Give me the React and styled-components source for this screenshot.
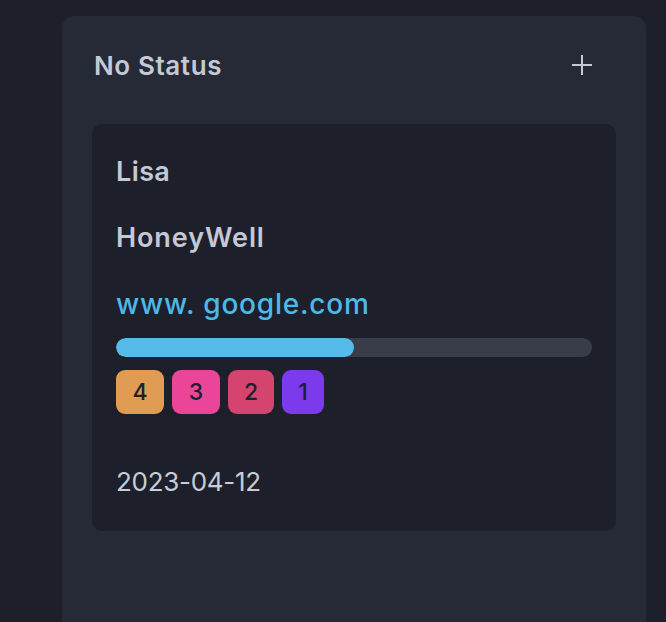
import React from "react";
import styled, { createGlobalStyle } from "styled-components";

const GlobalStyle = createGlobalStyle`
  html, body {
    margin: 0;
    padding: 0;
    background: #1d202a;
    font-family: "Inter", "Noto Sans", sans-serif;
    overflow: hidden;
  }
`;

const Page = styled.div`
  width: 666px;
  height: 622px;
  padding: 16px 0 0 62px;
  box-sizing: border-box;
  background: #1d202a;
  overflow: hidden;
`;

const Column = styled.div`
  width: 584px;
  height: 620px;
  background: #262a36;
  border-radius: 12px;
  padding: 31px 30px 0 30px;
  box-sizing: border-box;
`;

const Header = styled.div`
  display: flex;
  align-items: center;
  justify-content: space-between;
  height: 36px;
  padding: 0 24px 0 2px;
  margin-bottom: 41px;
`;

const Title = styled.h2`
  margin: 0;
  font-size: 26px;
  font-weight: 600;
  color: #c5c9d5;
  letter-spacing: 0.6px;
`;

const AddButton = styled.button`
  background: none;
  border: none;
  padding: 0;
  width: 20px;
  height: 20px;
  display: flex;
  align-items: center;
  justify-content: center;
  cursor: pointer;
`;

const Card = styled.div`
  background: #1d202b;
  border-radius: 10px;
  padding: 30px 24px 31px 24px;
  display: flex;
  flex-direction: column;
`;

const Line = styled.div`
  font-size: ${(p) => p.size || 27}px;
  font-weight: ${(p) => p.weight || 600};
  color: ${(p) => p.color || "#c5c9d5"};
  letter-spacing: ${(p) => p.spacing || 0.8}px;
  line-height: 36px;
  margin-bottom: ${(p) => p.gap || 30}px;
`;

const Track = styled.div`
  height: 19px;
  border-radius: 10px;
  background: #393d4a;
  overflow: hidden;
  margin-bottom: 13px;
`;

const Fill = styled.div`
  height: 100%;
  border-radius: 10px;
  background: #56bbeb;
`;

const Tags = styled.div`
  display: flex;
  gap: 8px;
  margin-bottom: 50px;
`;

const Tag = styled.span`
  width: ${(p) => p.w}px;
  height: 44px;
  border-radius: 9px;
  background: ${(p) => p.bg};
  color: #1d202a;
  font-size: 23px;
  font-weight: 500;
  display: flex;
  align-items: center;
  justify-content: center;
`;

const DateText = styled.div`
  font-size: 26px;
  color: #c8ccd6;
  letter-spacing: -0.3px;
  line-height: 36px;
`;

const tags = [
  { n: 4, bg: "#e09c52", w: 48 },
  { n: 3, bg: "#ea4598", w: 48 },
  { n: 2, bg: "#d4446e", w: 46 },
  { n: 1, bg: "#7c3aed", w: 42 },
];

export default function App() {
  return (
    <Page>
      <GlobalStyle />
      <Column>
        <Header>
          <Title>No Status</Title>
          <AddButton>
            <svg width="20" height="20" viewBox="0 0 20 20">
              <path d="M10 0v20M0 10h20" stroke="#c5c9d5" strokeWidth="2" />
            </svg>
          </AddButton>
        </Header>
        <Card>
          <Line spacing={0.4}>Lisa</Line>
          <Line spacing={0.9}>HoneyWell</Line>
          <Line size={28} weight={500} color="#4fb8e8" spacing={0.8} gap={16}>
            www. google.com
          </Line>
          <Track>
            <Fill style={{ width: "50%" }} />
          </Track>
          <Tags>
            {tags.map((t) => (
              <Tag key={t.n} bg={t.bg} w={t.w}>
                {t.n}
              </Tag>
            ))}
          </Tags>
          <DateText>2023-04-12</DateText>
        </Card>
      </Column>
    </Page>
  );
}
